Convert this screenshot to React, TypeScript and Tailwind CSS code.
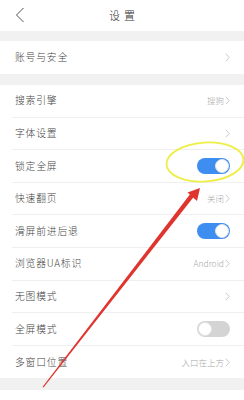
import { ReactNode } from 'react'

type Row = {
  label: string
  value?: string
  toggle?: boolean
}

const rows: Row[] = [
  { label: '搜索引擎', value: '搜狗' },
  { label: '字体设置', value: '' },
  { label: '锁定全屏', toggle: true },
  { label: '快速翻页', value: '关闭' },
  { label: '滑屏前进后退', toggle: true },
  { label: '浏览器UA标识', value: 'Android' },
  { label: '无图模式', value: '' },
  { label: '全屏模式', toggle: false },
  { label: '多窗口位置', value: '入口在上方' },
]

function Chevron() {
  return (
    <svg width="5" height="9" viewBox="0 0 5 9" className="ml-[1px]">
      <path d="M0.8 0.8 L4.2 4.5 L0.8 8.2" fill="none" stroke="#c4c4c4" strokeWidth="0.9" />
    </svg>
  )
}

function Toggle({ on }: { on: boolean }) {
  return (
    <div
      className={
        on
          ? 'w-[33px] h-[16px] rounded-full bg-[#3d8ef0] flex items-center justify-end pr-[1px]'
          : 'w-[33px] h-[16px] rounded-full bg-[#d4d4d4] flex items-center justify-start pl-[1px]'
      }
    >
      <div className="w-[14px] h-[14px] rounded-full bg-white border border-[#e4e4e4]" />
    </div>
  )
}

function SettingRow({ row, last }: { row: Row; last?: boolean }) {
  let right: ReactNode
  if (row.toggle !== undefined) {
    right = <Toggle on={row.toggle} />
  } else {
    right = (
      <div className="flex items-center text-[8.5px] font-light text-[#a8a8a8]">
        {row.value}
        <Chevron />
      </div>
    )
  }
  return (
    <div className="h-[32.6px] pl-[12px] bg-white">
      <div className={'h-full flex items-center justify-between pr-[14px] ' + (last ? '' : 'border-b border-[#efefef]')}>
        <span className="pl-[3px] text-[9.8px] font-light text-[#444] tracking-[0.8px]">{row.label}</span>
        {right}
      </div>
    </div>
  )
}

export default function App() {
  return (
    <div
      className="relative w-[244px] h-[400px] overflow-hidden bg-white"
      style={{ fontFamily: '"Noto Sans CJK SC", "Noto Sans", sans-serif' }}
    >
      {/* Header */}
      <header className="h-[31px] flex items-center justify-center relative bg-white">
        <svg width="10" height="16" viewBox="0 0 10 16" className="absolute left-[15px] top-[7px]">
          <path d="M8.5 1 L1.5 8 L8.5 15" fill="none" stroke="#555" strokeWidth="1" />
        </svg>
        <span className="text-[11px] font-light text-[#333] tracking-[4px] pl-[4px]">设置</span>
      </header>

      <div className="h-[10px] bg-[#f1f1f1]" />

      <div className="h-[33px] pl-[12px] bg-white">
        <div className="h-full flex items-center justify-between pr-[14px]">
          <span className="pl-[3px] text-[9.8px] font-light text-[#444] tracking-[0.8px]">账号与安全</span>
          <Chevron />
        </div>
      </div>

      <div className="h-[11px] bg-[#f1f1f1]" />

      {rows.map((r, i) => (
        <SettingRow key={r.label} row={r} last={i === rows.length - 1} />
      ))}

      <div className="h-[12px] bg-[#f1f1f1]" />

      {/* Annotation overlay */}
      <svg width="244" height="400" viewBox="0 0 244 400" className="absolute inset-0 pointer-events-none">
        <ellipse
          cx="205"
          cy="162"
          rx="38.5"
          ry="19.5"
          transform="rotate(-4 205 162)"
          fill="none"
          stroke="#eeee48"
          strokeWidth="1.8"
        />
        <polygon points="42.5,387 43.5,387.6 196,194 192.5,191" fill="#e0352f" />
        <polygon points="200,188 187.5,192.5 197,201" fill="#e0352f" />
      </svg>
    </div>
  )
}
